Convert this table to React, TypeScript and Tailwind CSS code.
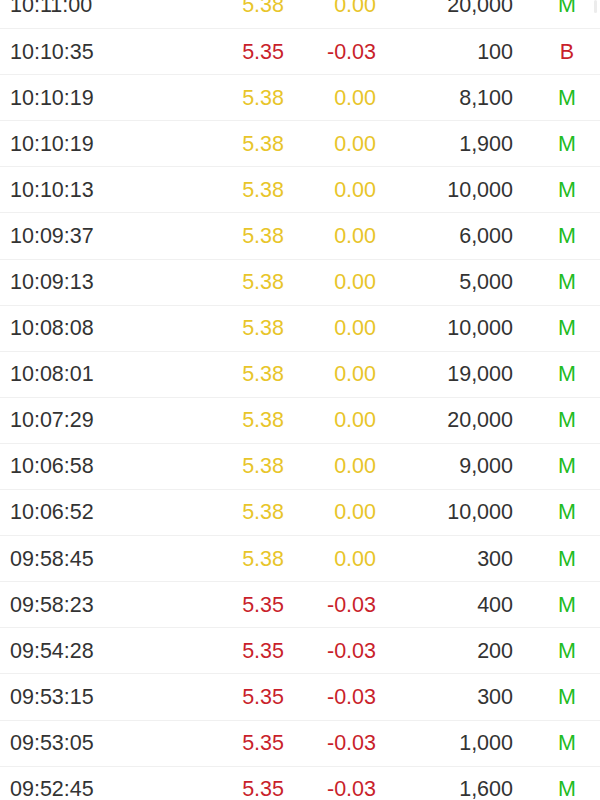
import React from "react";

type Trade = { time: string; price: string; change: string; vol: string; side: "M" | "B" };

const TRADES: Trade[] = [
  { time: "10:11:00", price: "5.38", change: "0.00", vol: "20,000", side: "M" },
  { time: "10:10:35", price: "5.35", change: "-0.03", vol: "100", side: "B" },
  { time: "10:10:19", price: "5.38", change: "0.00", vol: "8,100", side: "M" },
  { time: "10:10:19", price: "5.38", change: "0.00", vol: "1,900", side: "M" },
  { time: "10:10:13", price: "5.38", change: "0.00", vol: "10,000", side: "M" },
  { time: "10:09:37", price: "5.38", change: "0.00", vol: "6,000", side: "M" },
  { time: "10:09:13", price: "5.38", change: "0.00", vol: "5,000", side: "M" },
  { time: "10:08:08", price: "5.38", change: "0.00", vol: "10,000", side: "M" },
  { time: "10:08:01", price: "5.38", change: "0.00", vol: "19,000", side: "M" },
  { time: "10:07:29", price: "5.38", change: "0.00", vol: "20,000", side: "M" },
  { time: "10:06:58", price: "5.38", change: "0.00", vol: "9,000", side: "M" },
  { time: "10:06:52", price: "5.38", change: "0.00", vol: "10,000", side: "M" },
  { time: "09:58:45", price: "5.38", change: "0.00", vol: "300", side: "M" },
  { time: "09:58:23", price: "5.35", change: "-0.03", vol: "400", side: "M" },
  { time: "09:54:28", price: "5.35", change: "-0.03", vol: "200", side: "M" },
  { time: "09:53:15", price: "5.35", change: "-0.03", vol: "300", side: "M" },
  { time: "09:53:05", price: "5.35", change: "-0.03", vol: "1,000", side: "M" },
  { time: "09:52:45", price: "5.35", change: "-0.03", vol: "1,600", side: "M" },
];

export default function App() {
  return (
    <div className="relative w-[600px] h-[800px] overflow-hidden bg-white font-['Liberation_Sans',Arial,sans-serif] text-[21.5px]">
      <div className="mt-[-17px]">
        {TRADES.map((t, i) => {
          const down = t.change.startsWith("-");
          const tone = down ? "text-[#c91f2b]" : "text-[#e8c52a]";
          return (
            <div key={i} className="flex items-center h-[46.1px] border-b border-[#f0f0f0]">
              <div className="w-[190px] pl-[10px] text-[#333333]">{t.time}</div>
              <div className={`w-[94px] text-right ${tone}`}>{t.price}</div>
              <div className={`w-[92px] text-right ${tone}`}>{t.change}</div>
              <div className="w-[137px] text-right text-[#333333]">{t.vol}</div>
              <div
                className={`ml-[40px] w-[28px] text-center ${
                  t.side === "B" ? "text-[#c91f2b]" : "text-[#22bb22]"
                }`}
              >
                {t.side}
              </div>
            </div>
          );
        })}
      </div>
      {/* scroll indicator */}
      <div className="absolute top-0 right-[3px] w-[3px] h-[13px] rounded-full bg-[#ececec]" />
    </div>
  );
}
